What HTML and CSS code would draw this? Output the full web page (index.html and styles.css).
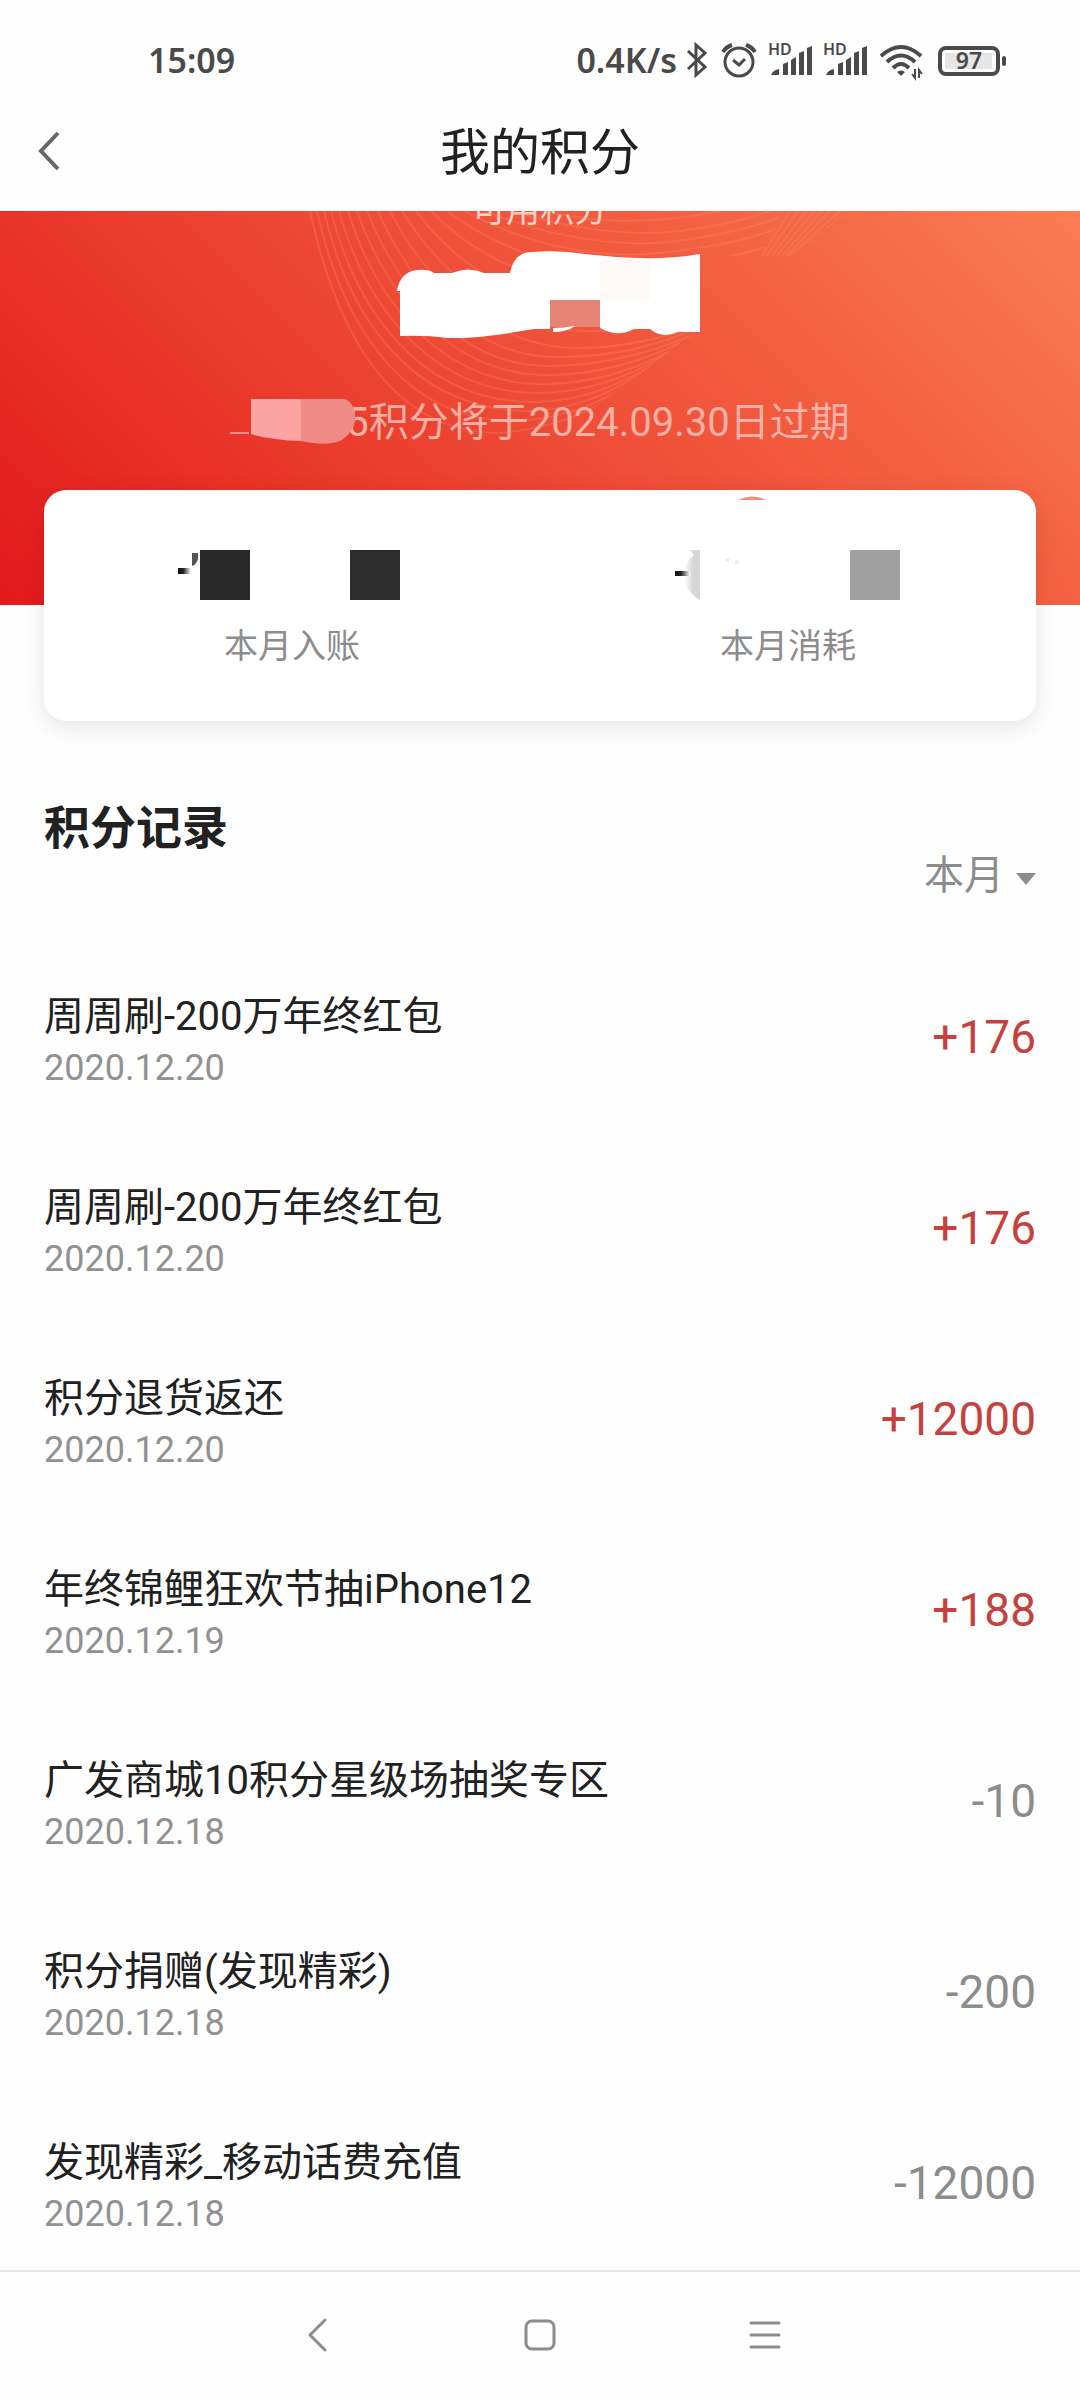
FILE: index.html
```html
<!DOCTYPE html>
<html lang="zh-CN">
<head>
    <meta charset="UTF-8">
    <meta name="viewport" content="width=device-width, initial-scale=1.0">
    <title>我的积分</title>
    <link rel="stylesheet" href="styles.css">
</head>
<body>

    <div class="status-bar">
        <span class="time">15:09</span>
        <div class="status-icons">
            <span class="speed">0.4K/s</span>
            <svg width="22" height="36" viewBox="0 0 22 36" fill="none" stroke="#4a4a4a" stroke-width="3">
                <path d="M2 9 L19 25 L10 33 V3 L19 11 L2 27"/>
            </svg>
            <svg width="36" height="36" viewBox="0 0 36 36" fill="none" stroke="#4a4a4a" stroke-width="3">
                <circle cx="18" cy="20" r="14"/>
                <path d="M12 18 L18 23 L24 17"/>
                <path d="M2 10 Q5 5 11 3 M34 10 Q31 5 25 3" stroke-width="4"/>
            </svg>
            <svg width="42" height="36" viewBox="0 0 42 36" fill="#4a4a4a">
                <text class="hd" x="-2" y="13">HD</text>
                <path d="M1 33 Q3 28 9 27 V33Z M13 33 V22 L18 20 V33Z M21 33 V18 L26 15 V33Z M29 33 V11 L34 9 V33Z M37 33 V6 L42 4 V33Z"/>
            </svg>
            <svg width="42" height="36" viewBox="0 0 42 36" fill="#4a4a4a">
                <text class="hd" x="-2" y="13">HD</text>
                <path d="M1 33 Q3 28 9 27 V33Z M13 33 V22 L18 20 V33Z M21 33 V18 L26 15 V33Z M29 33 V11 L34 9 V33Z M37 33 V6 L42 4 V33Z"/>
            </svg>
            <svg width="42" height="36" viewBox="0 0 42 36" fill="none" stroke="#4a4a4a" stroke-width="4">
                <path d="M1 14 Q21 -4 41 14 M7 20 Q21 7 35 20 M13 26 Q21 18 29 26"/>
                <path d="M17 30 Q21 27 25 30 L21 34Z" fill="#4a4a4a" stroke="none"/>
                <path d="M35 27 V36 L32 32 M39 36 V28 L42 32" stroke-width="2"/>
            </svg>
            <svg class="battery-icon" width="68" height="36" viewBox="0 0 68 36">
                <rect x="2" y="6" width="58" height="26" rx="6" fill="#fff" stroke="#4a4a4a" stroke-width="4"/>
                <rect x="7" y="11" width="47" height="16" fill="#e6e6e6"/>
                <rect x="64" y="14" width="4" height="10" rx="2" fill="#4a4a4a"/>
                <text class="battery" x="31" y="27">97</text>
            </svg>
        </div>
    </div>

    <header class="header">
        <button type="button" class="back" aria-label="返回">
            <svg width="22" height="40" viewBox="0 0 22 40" fill="none" stroke="#666" stroke-width="4">
                <path d="M20 2 L3 20 L20 38"/>
            </svg>
        </button>
        <h1>我的积分</h1>
    </header>

    <main class="main">
        <section class="banner">
            <svg class="waves" width="600" height="240" viewBox="300 0 600 240" fill="none" stroke="#ff9a7a" stroke-opacity="0.22" stroke-width="2">
                <clipPath id="fan">
                    <path d="M300 0 H850 L790 45 H700 V118 L590 200 L555 218 L500 240 H300Z"/>
                </clipPath>
                <g clip-path="url(#fan)">
                    <path d="M310 0 C334 110 385 222 500 222 Q580 215 640 168"/>
                    <path d="M317 0 C340 105 398 210 515 210 Q585 207 645 163"/>
                    <path d="M324 0 C347 100 408 200 530 200 Q592 198 650 156"/>
                    <path d="M331 0 C355 95 418 192 535 191 Q598 190 660 149"/>
                    <path d="M339 0 C364 90 428 183 540 182 Q604 181 665 144"/>
                    <path d="M348 0 C374 85 438 174 545 173 Q610 172 670 140"/>
                    <path d="M357 0 C385 80 448 165 550 164 Q616 163 680 132"/>
                    <path d="M367 0 C397 75 458 156 550 155 Q622 154 690 125"/>
                    <path d="M378 0 C409 70 470 148 560 146 Q640 145 700 115"/>
                    <path d="M390 0 C421 60 485 138 580 137 Q650 136 710 108"/>
                    <path d="M402 0 C436 54 500 124 600 120 Q670 118 725 98"/>
                    <path d="M416 0 C452 48 520 104 620 98 Q690 92 738 78"/>
                    <path d="M431 0 C470 40 540 84 640 76 Q710 66 750 56"/>
                    <path d="M447 0 C490 32 560 66 650 58 Q730 48 765 36"/>
                    <path d="M464 0 C510 24 580 50 660 42 Q735 34 775 18"/>
                    <path d="M484 0 C530 18 600 38 670 31 Q740 22 780 6"/>
                    <path d="M510 0 C560 14 620 27 680 20 Q730 14 770 0"/>
                    <path d="M545 0 C590 10 640 16 720 0"/>
                    <path d="M762 45 L790 0 M767 45 L798 0 M772 45 L806 0 M777 45 L814 0 M782 45 L822 0 M786 45 L830 0 M789 45 L840 0 M790 45 L850 0"/>
                </g>
            </svg>
            <p class="banner-label">可用积分</p>
            <svg class="total" width="322" height="90" viewBox="-21 0 322 90">
                <path fill="#fff" d="M0 40 H-3 Q0 21 17 19 Q28 18 34 22 H52 Q68 15 84 22 H110 Q114 1 132 1 Q160 -1 185 3 C220 7 260 10 300 3 V81 H278 Q262 88 250 78 H234 Q218 87 200 77 V50 H150 V78 H134 C110 82 75 88 48 87 Q26 84 0 85 V40Z"/>
                <rect x="150" y="49" width="50" height="27" fill="#e58375"/>
                <path fill="#fff" d="M153 81 V77 Q163 77 175 75 Q167 81 153 81Z"/>
                <rect x="200" y="9" width="50" height="40" fill="#fffaf8"/>
            </svg>
            <p class="expire">
                <svg class="smudge" width="130" height="52" viewBox="0 0 130 52">
                    <rect x="0" y="35" width="19" height="2" fill="#f48f86"/>
                    <path fill="#fca3a3" d="M21 2 H72 V44 Q40 43 21 37Z"/>
                    <path fill="#f08c87" d="M71 2 H114 Q125 5 125 22 Q125 34 112 43 Q98 50 71 44Z"/>
                </svg>
                <span>5积分将于2024.09.30日过期</span>
            </p>
        </section>

        <section class="card">
            <div class="card-item">
                <svg width="232" height="60" viewBox="0 0 232 60">
                    <defs>
                        <linearGradient id="fade">
                            <stop offset="0" stop-color="#111"/>
                            <stop offset="0.4" stop-color="#222"/>
                            <stop offset="1" stop-color="#fff"/>
                        </linearGradient>
                        <linearGradient id="haze">
                            <stop offset="0" stop-color="#fff"/>
                            <stop offset="0.6" stop-color="#d6d6d6"/>
                        </linearGradient>
                    </defs>
                    <rect x="2" y="23" width="13" height="6" fill="url(#fade)"/>
                    <path d="M16 8 H22 V14 Q20 20 16 21Z" fill="#555"/>
                    <rect x="24" y="5" width="50" height="50" fill="#292929"/>
                    <rect x="174" y="5" width="50" height="50" fill="#2d2d2d"/>
                </svg>
                <span>本月入账</span>
            </div>
            <div class="card-item">
                <svg width="232" height="60" viewBox="0 0 232 60">
                    <path d="M18 5 H28 V55 Q12 46 12 30 Q12 18 22 10Z" fill="url(#haze)"/>
                    <rect x="3" y="26" width="15" height="5" fill="url(#fade)"/>
                    <path d="M53 15 h4 M63 17 h4" stroke="#ececec" stroke-width="3"/>
                    <rect x="178" y="5" width="50" height="50" fill="#a0a0a0"/>
                </svg>
                <span>本月消耗</span>
            </div>
            <svg class="card-mark" width="28" height="4" viewBox="0 0 28 4">
                <path d="M0 4 Q14 -3 28 4Z" fill="#f08a78"/>
            </svg>
        </section>

        <section class="records">
            <h2>积分记录</h2>
            <div class="filter">
                <select id="month" aria-label="月份">
                    <option>本月</option>
                </select>
                <label for="month" aria-label="月份">
                    <svg width="20" height="12" viewBox="0 0 20 12"><path d="M0 0 H20 L10 12Z" fill="#8c8c8c"/></svg>
                </label>
            </div>

            <ul class="list">
                <li>
                    <div class="info"><p class="name">周周刷-200万年终红包</p><p class="date">2020.12.20</p></div>
                    <span class="amount plus">+176</span>
                </li>
                <li>
                    <div class="info"><p class="name">周周刷-200万年终红包</p><p class="date">2020.12.20</p></div>
                    <span class="amount plus">+176</span>
                </li>
                <li>
                    <div class="info"><p class="name">积分退货返还</p><p class="date">2020.12.20</p></div>
                    <span class="amount plus">+12000</span>
                </li>
                <li>
                    <div class="info"><p class="name">年终锦鲤狂欢节抽iPhone12</p><p class="date">2020.12.19</p></div>
                    <span class="amount plus">+188</span>
                </li>
                <li>
                    <div class="info"><p class="name">广发商城10积分星级场抽奖专区</p><p class="date">2020.12.18</p></div>
                    <span class="amount">-10</span>
                </li>
                <li>
                    <div class="info"><p class="name">积分捐赠(发现精彩)</p><p class="date">2020.12.18</p></div>
                    <span class="amount">-200</span>
                </li>
                <li>
                    <div class="info"><p class="name">发现精彩_移动话费充值</p><p class="date">2020.12.18</p></div>
                    <span class="amount">-12000</span>
                </li>
            </ul>
        </section>
    </main>

    <nav class="nav">
        <button type="button" aria-label="返回">
            <svg width="36" height="36" viewBox="0 0 36 36" fill="none" stroke="#8c8c8c" stroke-width="3" stroke-linecap="round" stroke-linejoin="round">
                <path d="M27 3 L12 18 L27 33"/>
            </svg>
        </button>
        <button type="button" aria-label="主页">
            <svg width="36" height="36" viewBox="0 0 36 36" fill="none" stroke="#8c8c8c" stroke-width="3">
                <rect x="4" y="4" width="28" height="28" rx="6"/>
            </svg>
        </button>
        <button type="button" aria-label="菜单">
            <svg width="36" height="36" viewBox="0 0 36 36" fill="none" stroke="#8c8c8c" stroke-width="3" stroke-linecap="round">
                <path d="M5 6 H33 M5 18 H33 M5 30 H33"/>
            </svg>
        </button>
    </nav>

</body>
</html>
```

FILE: styles.css
```css
* {
    box-sizing: border-box;
    margin: 0;
    padding: 0;
}
body {
    display: flex;
    flex-direction: column;
    height: 100vh;
    background-color: #fefefe;
    color: #212121;
    font-family: Roboto, "Noto Sans CJK SC", sans-serif;
}
svg {
    display: block;
    flex-shrink: 0;
    overflow: visible;
}
button {
    border: none;
    background: none;
    cursor: pointer;
}

/* 状态栏 */
.status-bar {
    display: flex;
    justify-content: space-between;
    align-items: center;
    padding: 36px 74px 36px 148px;
    color: #4a4a4a;
    font-family: "Noto Sans", sans-serif;
    font-size: 34px;
    font-weight: 600;
    line-height: 48px;
}
.status-icons {
    display: flex;
    align-items: center;
    gap: 13px;
}
.speed {
    margin-right: -4px;
}
.battery-icon {
    margin-left: 3px;
}
.hd {
    font-size: 16px;
    font-weight: 600;
}
.battery {
    font-size: 23px;
    font-weight: 600;
    text-anchor: middle;
    fill: #4a4a4a;
}

/* 标题栏 */
.header {
    display: grid;
    grid-template-columns: 80px 1fr 80px;
    align-items: center;
    height: 91px;
    padding-bottom: 28px;
    flex-shrink: 0;
}
.back {
    padding-left: 38px;
    padding-bottom: 2px;
}
.header h1 {
    padding-top: 2px;
    font-size: 50px;
    font-weight: 400;
    line-height: 60px;
    text-align: center;
}

.main {
    flex: 1;
    min-height: 0;
    overflow: hidden;
}
.banner {
    position: relative;
    display: flex;
    flex-direction: column;
    align-items: center;
    height: 394px;
    overflow: hidden;
    background: linear-gradient(45deg, #e2191b 0%, #e93529 27%, #ed4734 45%, #f46443 76%, #fb7d51 100%);
}
.waves {
    position: absolute;
    top: 0;
    left: 50%;
    margin-left: -240px;
}
.banner-label {
    margin-top: -25px;
    color: #ffd3c8;
    font-size: 34px;
    line-height: 48px;
}
.total {
    position: relative;
    margin-top: 17px;
}
.expire {
    position: relative;
    display: flex;
    align-items: center;
    margin-top: 54px;
    color: #fbb0a6;
    font-size: 40px;
    line-height: 56px;
}
.smudge {
    position: relative;
    margin-right: -14px;
}

/* 收支卡片 */
.card {
    position: relative;
    display: grid;
    grid-template-columns: 1fr 1fr;
    margin: -115px 44px 0;
    padding: 55px 0 51px;
    border-radius: 22px;
    background-color: #fff;
    box-shadow: 0 6px 24px rgba(0, 0, 0, 0.1);
}
.card-item {
    display: flex;
    flex-direction: column;
    align-items: center;
    gap: 17px;
    color: #8c8c8c;
    font-size: 34px;
    line-height: 48px;
}
.card-mark {
    position: absolute;
    top: 6px;
    left: 70%;
}

/* 积分记录 */
.records {
    padding: 77px 44px 0;
}
.records h2 {
    font-size: 46px;
    font-weight: 700;
    line-height: 60px;
}
.filter {
    display: flex;
    justify-content: flex-end;
    align-items: center;
    gap: 12px;
    margin-top: -10px;
}
.filter select {
    appearance: none;
    border: none;
    background: none;
    color: #8c8c8c;
    font-family: inherit;
    font-size: 40px;
    line-height: 56px;
}
.filter label {
    padding-top: 6px;
}
.list {
    margin-top: 37px;
    list-style: none;
}
.list li {
    display: flex;
    justify-content: space-between;
    align-items: center;
    height: 191px;
}
.info {
    padding-top: 6px;
}
.name {
    font-size: 40px;
    line-height: 56px;
}
.date {
    color: #919191;
    font-size: 36px;
    line-height: 46px;
}
.amount {
    color: #8c8c8c;
    font-size: 46px;
    line-height: 60px;
}
.plus {
    color: #c5413d;
}

.nav {
    display: flex;
    justify-content: center;
    gap: 176px;
    padding: 39px 0 41px;
    border-top: 2px solid #e8e8e8;
}
.nav button {
    padding: 6px;
}
```
